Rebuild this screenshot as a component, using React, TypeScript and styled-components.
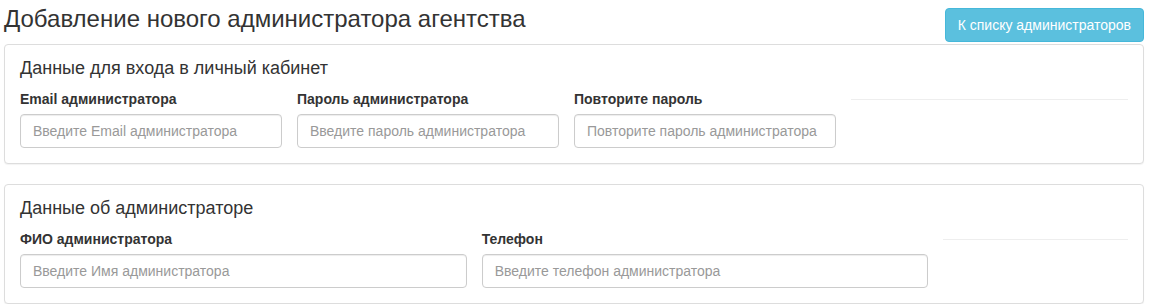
import styled, { createGlobalStyle } from "styled-components";

const GlobalStyle = createGlobalStyle`
  body {
    margin: 0;
    background: #fff;
    font-family: "Liberation Sans", Arial, sans-serif;
    font-size: 14px;
    line-height: 1.42857;
    color: #333;
  }
  * { box-sizing: border-box; }
`;

const Page = styled.div`
  padding: 0 5px 0 4px;
`;

const Header = styled.div`
  display: flex;
  justify-content: space-between;
  align-items: flex-start;
  height: 44px;
`;

const Title = styled.h3`
  margin: 6px 0 0;
  font-size: 24px;
  font-weight: 400;
  line-height: 1.1;
  color: #333;
`;

const BackButton = styled.button`
  margin-top: 8px;
  height: 34px;
  padding: 6px 12px;
  font-family: inherit;
  font-size: 14px;
  line-height: 20px;
  color: #fff;
  background: #5bc0de;
  border: 1px solid #46b8da;
  border-radius: 4px;
  cursor: pointer;
`;

const Panel = styled.div`
  border: 1px solid #ddd;
  border-radius: 4px;
  background: #fff;
  box-shadow: 0 1px 1px rgba(0, 0, 0, 0.05);
  padding: 14px 15px 15px;
  & + & {
    margin-top: 20px;
  }
`;

const PanelTitle = styled.h4`
  margin: 0 0 10px;
  font-size: 18px;
  font-weight: 400;
  line-height: 1.1;
  color: #333;
`;

const Row = styled.div<{ $cols: string }>`
  display: grid;
  grid-template-columns: ${(p) => p.$cols};
`;

const Field = styled.div`
  padding-right: 15px;
  min-width: 0;
`;

const Label = styled.label`
  display: block;
  margin-bottom: 5px;
  font-weight: 700;
  font-size: 14px;
  line-height: 20px;
`;

const Input = styled.input`
  display: block;
  width: 100%;
  height: 34px;
  padding: 6px 12px;
  font-family: inherit;
  font-size: 14px;
  line-height: 20px;
  color: #555;
  background: #fff;
  border: 1px solid #ccc;
  border-radius: 4px;
  box-shadow: inset 0 1px 1px rgba(0, 0, 0, 0.075);
  &::placeholder {
    color: #999;
  }
`;

const Divider = styled.hr`
  margin: 10px 0 0;
  border: 0;
  border-top: 1px solid #eee;
`;

type FieldDef = { label: string; placeholder: string; type?: string };

const loginFields: FieldDef[] = [
  { label: "Email администратора", placeholder: "Введите Email администратора", type: "email" },
  { label: "Пароль администратора", placeholder: "Введите пароль администратора", type: "password" },
  { label: "Повторите пароль", placeholder: "Повторите пароль администратора", type: "password" },
];

const infoFields: FieldDef[] = [
  { label: "ФИО администратора", placeholder: "Введите Имя администратора" },
  { label: "Телефон", placeholder: "Введите телефон администратора" },
];

const FormPanel = ({ title, fields, cols }: { title: string; fields: FieldDef[]; cols: string }) => (
  <Panel>
    <PanelTitle>{title}</PanelTitle>
    <Row $cols={cols}>
      {fields.map((f) => (
        <Field key={f.label}>
          <Label>{f.label}</Label>
          <Input type={f.type ?? "text"} placeholder={f.placeholder} />
        </Field>
      ))}
      <div>
        <Divider />
      </div>
    </Row>
  </Panel>
);

export default function App() {
  return (
    <Page>
      <GlobalStyle />
      <Header>
        <Title>Добавление нового администратора агентства</Title>
        <BackButton>К списку администраторов</BackButton>
      </Header>
      <FormPanel title="Данные для входа в личный кабинет" fields={loginFields} cols="3fr 3fr 3fr 3fr" />
      <FormPanel title="Данные об администраторе" fields={infoFields} cols="5fr 5fr 2fr" />
    </Page>
  );
}
